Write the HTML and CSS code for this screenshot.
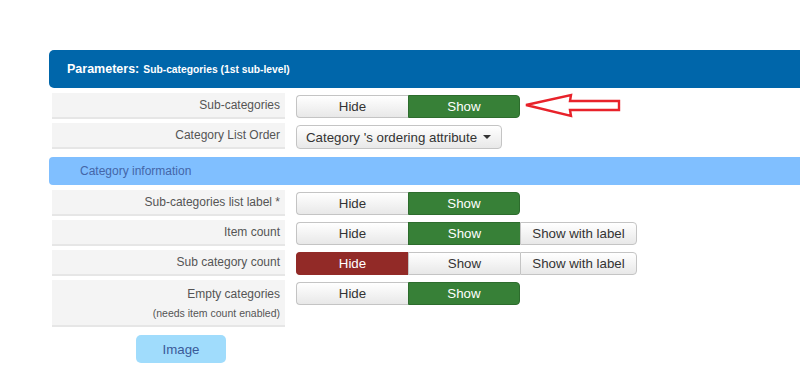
FILE: index.html
```html
<!DOCTYPE html>
<html lang="en">
<head>
  <meta charset="UTF-8" />
  <title>Parameters: Sub-categories</title>
  <link rel="stylesheet" href="styles.css">
</head>
<body>
  <div class="panel">
    <!-- header -->
    <div class="panel-head">
      <strong>Parameters:</strong> <span class="sub">Sub-categories (1st sub-level)</span>
    </div>

    <div class="form-row">
      <div class="label">Sub-categories</div>
      <div class="controls">
        <div class="btn-group">
          <span class="btn">Hide</span>
          <span class="btn btn-success">Show</span>
        </div>
        <svg class="arrow" width="100" height="26" viewBox="0 0 100 26">
          <polygon points="3,12 48,2 47,8 96,8 96,17 47,17 48,23" fill="none" stroke="#e8222a" stroke-width="2.4" stroke-linejoin="miter"/>
        </svg>
      </div>
    </div>

    <div class="form-row">
      <div class="label">Category List Order</div>
      <div class="controls">
        <span class="dropdown">Category 's ordering attribute <span class="caret"></span></span>
      </div>
    </div>

    <div class="section-head">Category information</div>

    <div class="form-row">
      <div class="label">Sub-categories list label *</div>
      <div class="controls">
        <div class="btn-group">
          <span class="btn">Hide</span>
          <span class="btn btn-success">Show</span>
        </div>
      </div>
    </div>

    <div class="form-row">
      <div class="label">Item count</div>
      <div class="controls">
        <div class="btn-group">
          <span class="btn">Hide</span>
          <span class="btn btn-success">Show</span>
          <span class="btn btn-wide">Show with label</span>
        </div>
      </div>
    </div>

    <div class="form-row">
      <div class="label">Sub category count</div>
      <div class="controls">
        <div class="btn-group">
          <span class="btn btn-danger">Hide</span>
          <span class="btn">Show</span>
          <span class="btn btn-wide">Show with label</span>
        </div>
      </div>
    </div>

    <div class="form-row tall">
      <div class="label">Empty categories<small>(needs item count enabled)</small></div>
      <div class="controls">
        <div class="btn-group">
          <span class="btn">Hide</span>
          <span class="btn btn-success">Show</span>
        </div>
      </div>
    </div>

    <div class="image-wrap">
      <span class="image-btn">Image</span>
    </div>
  </div>
</body>
</html>
```

FILE: styles.css
```css
/* —————— RESET —————— */
*{margin:0;padding:0;box-sizing:border-box;font-family:"Liberation Sans",Arial,sans-serif;}

body{
  background:#fff;
  color:#333;
  overflow:hidden;
}

/* —————— PANEL —————— */
.panel{
  margin:50px 0 0 49px;
  display:flex;
  flex-direction:column;
}
.panel-head{
  height:38px;
  background:#0066aa;
  color:#fff;
  border-radius:5px 0 0 5px;
  padding-left:18px;
  display:flex;
  align-items:center;
  gap:4px;
  font-size:12.5px;
  margin-bottom:5px;
}
.panel-head .sub{font-size:10.3px;font-weight:bold;}

.section-head{
  height:28px;
  margin:4px 0 5px;
  background:#80bfff;
  color:#4466a8;
  border-radius:4px 0 0 4px;
  padding-left:31px;
  display:flex;
  align-items:center;
  font-size:12px;
}

/* —————— ROWS —————— */
.form-row{
  display:flex;
  margin-left:3px;
  margin-bottom:4px;
  height:26px;
}
.form-row.tall{height:47px;}
.label{
  width:233px;
  flex-shrink:0;
  background:#f4f4f4;
  border-bottom:2px solid #e6e6e6;
  text-align:right;
  padding:5px 5px 0 0;
  font-size:12px;
  color:#555;
}
.tall .label{padding-top:7px;}
.label small{display:block;font-size:10.5px;margin-top:6px;}
.controls{
  padding:2px 0 0 11px;
  display:flex;
  align-items:flex-start;
}

/* —————— BUTTONS —————— */
.btn-group{display:flex;}
.btn{
  width:112px;
  height:23px;
  display:flex;
  align-items:center;
  justify-content:center;
  font-size:13.3px;
  color:#333;
  background:linear-gradient(#fff,#e8e8e8);
  border:1px solid #c4c4c4;
  border-right:none;
}
.btn:first-child{border-radius:4px 0 0 4px;}
.btn:last-child{border-radius:0 4px 4px 0;border-right:1px solid #c4c4c4;}
.btn-wide{width:117px;}
.btn-success{background:#378037;border-color:#2d6c2d;color:#fff;}
.btn-danger{background:#922a27;border-color:#922a27;color:#fff;}
.btn-success:last-child{border-right-color:#2d6c2d;}

.arrow{margin:-2px 0 0 3px;}

.dropdown{
  height:24px;
  width:206px;
  display:flex;
  align-items:center;
  padding-left:9px;
  font-size:13.3px;
  color:#333;
  background:linear-gradient(#fff,#e8e8e8);
  border:1px solid #c4c4c4;
  border-radius:4px;
}
.caret{
  display:inline-block;
  margin-left:6px;
  border-left:4px solid transparent;
  border-right:4px solid transparent;
  border-top:4px solid #333;
}

/* —————— IMAGE —————— */
.image-wrap{padding:4px 0 0 87px;}
.image-btn{
  display:flex;
  align-items:center;
  justify-content:center;
  width:90px;
  height:28px;
  background:#a0dcfc;
  color:#3a5a98;
  border-radius:5px;
  font-size:13.3px;
}
```
